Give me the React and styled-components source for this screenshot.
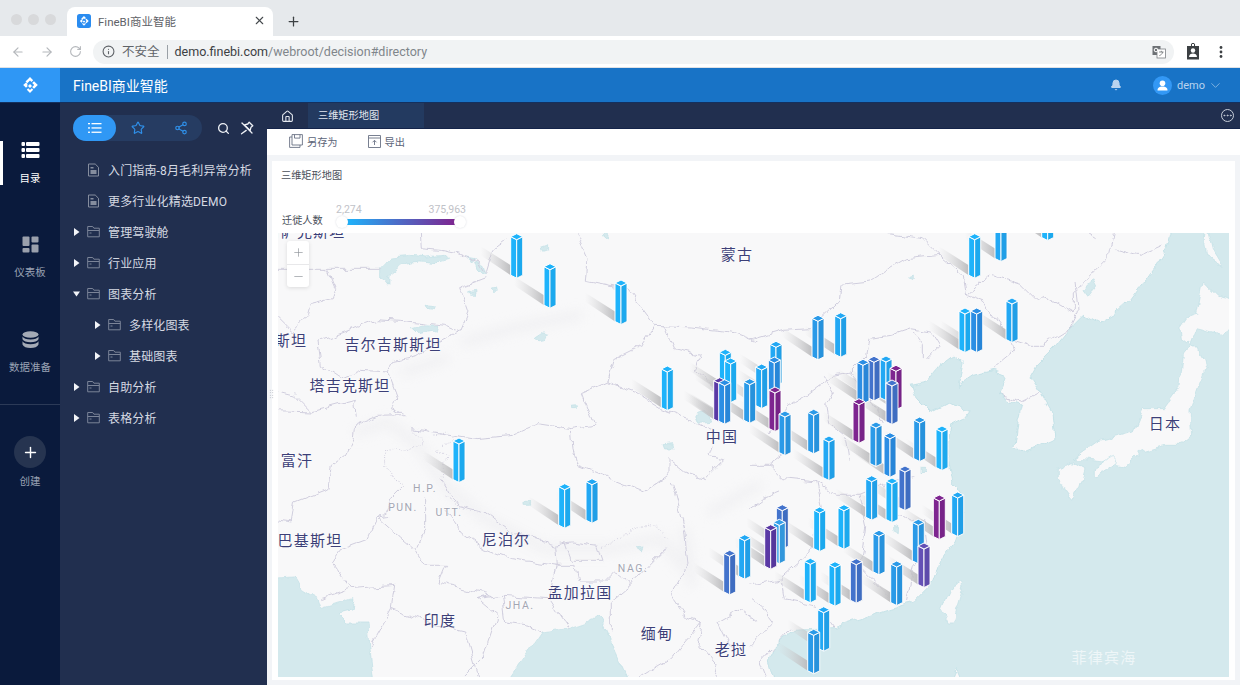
import styled, { createGlobalStyle } from 'styled-components';
import {
  ArrowLeft, ArrowRight, RotateCw, Info, X, Plus, Minus, Bell, ChevronDown, Home, Star, Share2,
  Search, Ellipsis,
} from 'lucide-react';

const GlobalStyle = createGlobalStyle`
  html, body { margin: 0; padding: 0; height: 100%; overflow: hidden; background: #fff; }
  body { font-family: Roboto, "Noto Sans CJK SC", sans-serif; }
  * { box-sizing: border-box; }
`;

const Page = styled.div`
  width: 1240px;
  height: 685px;
  display: flex;
  flex-direction: column;
  overflow: hidden;
`;

/* browser chrome */
const TabStrip = styled.div`
  height: 36px;
  background: #e6e9ec;
  display: flex;
  align-items: flex-end;
  padding-left: 11px;
`;
const Lights = styled.div`
  display: flex;
  gap: 6px;
  align-self: center;
  margin-top: 3px;
  width: 56px;
`;
const Light = styled.span`
  width: 11px;
  height: 11px;
  border-radius: 50%;
  background: #d8d9db;
`;
const BrowserTab = styled.div`
  width: 206px;
  height: 29px;
  background: #fff;
  border-radius: 8px 8px 0 0;
  display: flex;
  align-items: center;
  padding: 0 7px 2px 10px;
  gap: 7px;
  font-size: 11.5px;
  color: #5f6368;
`;
const TabTitle = styled.span`
  flex: 1;
`;
const NewTab = styled.div`
  width: 40px;
  height: 29px;
  display: flex;
  align-items: center;
  justify-content: center;
  color: #3c4043;
`;
const Toolbar = styled.div`
  height: 32px;
  background: #fff;
  display: flex;
  align-items: center;
  padding: 0 11px;
  border-bottom: 1px solid #dfe1e5;
`;
const NavArrows = styled.div`
  display: flex;
  gap: 15px;
  color: #b4b7bb;
  width: 82px;
`;
const Omnibox = styled.div`
  width: 1081px;
  height: 24px;
  background: #f1f3f4;
  border-radius: 12px;
  display: flex;
  align-items: center;
  padding: 0 8px 0 9px;
  font-size: 12.5px;
  color: #80868b;
`;
const Insecure = styled.span`
  color: #5f6368;
  margin-left: 7px;
  padding-right: 7px;
  margin-right: 7px;
  border-right: 1px solid #9aa0a6;
  line-height: 14px;
`;
const Host = styled.span`
  color: #3c4043;
`;
const UrlText = styled.span`
  flex: 1;
`;
const ToolIcons = styled.div`
  display: flex;
  align-items: center;
  margin-left: 12px;
  gap: 19px;
`;

/* app */
const AppHeader = styled.header`
  height: 35px;
  background: #1873c6;
  border-bottom: 1px solid #14305e;
  display: flex;
  align-items: center;
  color: #fff;
`;
const LogoBox = styled.div`
  width: 60px;
  height: 100%;
  background: #2f97f5;
  display: flex;
  align-items: center;
  justify-content: center;
`;
const AppTitle = styled.div`
  margin-left: 13px;
  font-size: 14px;
  flex: 1;
`;
const BellWrap = styled.div`
  display: flex;
  color: #b9d3ef;
  margin-right: 31px;
`;
const Avatar = styled.div`
  width: 19px;
  height: 19px;
  border-radius: 50%;
  background: #3398f5;
  display: flex;
  align-items: center;
  justify-content: center;
`;
const UserName = styled.span`
  font-size: 11px;
  color: #b9d3ef;
  margin: 0 3px 0 5px;
`;
const UserMenu = styled.div`
  display: flex;
  align-items: center;
  color: #b9d3ef;
  margin-right: 17px;
`;

const Body = styled.div`
  flex: 1;
  display: flex;
  min-height: 0;
`;
const SideNav = styled.nav`
  width: 60px;
  background: #0a1a3c;
  padding-top: 37px;
  display: flex;
  flex-direction: column;
  align-items: stretch;
`;
const NavList = styled.div`
  display: flex;
  flex-direction: column;
  gap: 50px;
  margin-bottom: 29px;
`;
const NavItem = styled.div`
  height: 45px;
  position: relative;
  display: flex;
  flex-direction: column;
  align-items: center;
  gap: 11px;
  font-size: 10.5px;
  line-height: 15px;
  color: ${({ $active }) => ($active ? '#fff' : '#9aa3b4')};
  ${({ $active }) => $active && `
    &::before {
      content: '';
      position: absolute;
      left: 0;
      top: 1px;
      width: 3px;
      height: 44px;
      background: #fff;
    }
  `}
`;
const NavIcon = styled.div`
  height: 20px;
  display: flex;
  align-items: center;
`;
const NavDivider = styled.div`
  height: 1px;
  background: #2c3a57;
`;
const CreateBlock = styled.div`
  display: flex;
  flex-direction: column;
  align-items: center;
  margin-top: 31px;
  gap: 6px;
  font-size: 10.5px;
  line-height: 15px;
  color: #9aa3b4;
`;
const CreateCircle = styled.div`
  width: 32px;
  height: 32px;
  border-radius: 50%;
  background: #263450;
  color: #fff;
  display: flex;
  align-items: center;
  justify-content: center;
`;

const Panel = styled.aside`
  width: 207px;
  background: #212f4f;
  padding-top: 12px;
`;
const PanelTop = styled.div`
  display: flex;
  align-items: center;
  padding-left: 13px;
`;
const Pills = styled.div`
  width: 129px;
  height: 26px;
  border-radius: 13px;
  background: #263c62;
  display: flex;
  align-items: center;
  margin-right: 15px;
`;
const Pill = styled.div`
  width: 43px;
  height: 26px;
  border-radius: 13px;
  background: ${({ $active }) => ($active ? '#3098f5' : 'transparent')};
  color: ${({ $active }) => ($active ? '#fff' : '#2f8fe8')};
  display: flex;
  align-items: center;
  justify-content: center;
`;
const PanelTool = styled.div`
  display: flex;
  width: 23px;
  color: #eef1f6;
`;
const Tree = styled.ul`
  list-style: none;
  margin: 13px 0 0;
  padding: 0;
`;
const TreeRow = styled.li`
  height: 31px;
  display: flex;
  align-items: center;
  padding-left: ${({ $level }) => 13 + $level * 21}px;
  font-size: 12px;
  letter-spacing: 0.15px;
  color: #d6dae3;
`;
const Caret = styled.span`
  width: 14px;
  display: flex;
  svg { display: block; }
`;
const TreeLabel = styled.span`
  margin-left: 8px;
  white-space: nowrap;
`;

const Main = styled.main`
  flex: 1;
  display: flex;
  flex-direction: column;
  min-width: 0;
  background: #f2f4f7;
`;
const TabBar = styled.div`
  height: 26px;
  background: #212f4f;
  border-bottom: 1px solid #14244a;
  display: flex;
  align-items: center;
  color: #e4e8ef;
`;
const HomeTab = styled.div`
  width: 41px;
  padding-top: 1px;
  display: flex;
  justify-content: center;
`;
const ReportTab = styled.div`
  width: 116px;
  height: 25px;
  background: #233a60;
  font-size: 10.2px;
  line-height: 25px;
  padding-left: 10px;
`;
const TabMore = styled.div`
  margin-left: auto;
  margin-right: 6px;
  display: flex;
  color: #c8ced9;
`;
const MoreRing = styled.span`
  display: flex;
  border: 1px solid #c8ced9;
  border-radius: 50%;
`;
const ActionBar = styled.div`
  height: 26px;
  background: #fff;
  display: flex;
  align-items: center;
  padding: 0 0 2px 22px;
  gap: 30px;
`;
const Action = styled.div`
  display: flex;
  align-items: center;
  gap: 4px;
  font-size: 10.2px;
  color: #5c6578;
`;
const Card = styled.section`
  flex: 1;
  margin: 6px 5px 5px;
  background: #fff;
  display: flex;
  flex-direction: column;
  min-height: 0;
  padding: 0 6px 3px;
`;
const CardTitle = styled.div`
  height: 28px;
  padding-left: 3px;
  font-size: 10.2px;
  line-height: 29px;
  color: #4a4f5a;
`;
const Legend = styled.div`
  height: 44px;
  display: flex;
  align-items: flex-end;
  padding: 0 0 5px 4px;
  font-size: 10.2px;
  color: #4a4f5a;
`;
const LegendName = styled.span`
  line-height: 14px;
  width: 54px;
`;
const LegendScale = styled.div`
  width: 130px;
  display: flex;
  flex-direction: column;
  margin-bottom: 1px;
`;
const LegendValues = styled.div`
  display: flex;
  justify-content: space-between;
  font-size: 10.5px;
  line-height: 12px;
  color: #bfc2c8;
  padding-bottom: 3px;
`;
const Track = styled.div`
  position: relative;
  height: 6px;
  margin: 0 11px 2px;
  background: linear-gradient(90deg, #1eb3fb, #4b6fc9 45%, #7e2590);
`;
const Knob = styled.span`
  position: absolute;
  top: -3px;
  ${({ $side }) => $side}: -11px;
  width: 12px;
  height: 12px;
  border-radius: 50%;
  background: #fff;
  box-shadow: 0 0 2px rgba(120, 130, 150, 0.3);
`;

const MapCanvas = styled.div`
  flex: 1;
  position: relative;
  overflow: hidden;
  background: #f8f8f9;
  min-height: 0;
  svg { display: block; }
`;
const ZoomBox = styled.div`
  position: absolute;
  left: 9px;
  top: 8px;
  width: 22px;
  border-radius: 3px;
  background: #fff;
  box-shadow: 0 1px 4px rgba(0, 0, 0, 0.12);
  color: #8b8f96;
`;
const ZoomButton = styled.div`
  height: 23px;
  display: flex;
  align-items: center;
  justify-content: center;
  & + & { border-top: 1px solid #e8e8ea; }
`;
const Place = styled.span`
  position: absolute;
  left: ${({ $x }) => $x - 278}px;
  top: ${({ $y, $minor }) => $y - 233 - ($minor ? 1 : 2)}px;
  transform: translate(-50%, -50%);
  white-space: nowrap;
  font-size: ${({ $minor }) => ($minor ? '10.5px' : '15px')};
  letter-spacing: ${({ $minor }) => ($minor ? '1.5px' : '1.2px')};
  color: ${({ $minor, $sea }) => ($sea ? '#eef6f8' : $minor ? '#a3a6b3' : '#3c3f78')};
  text-shadow: ${({ $sea }) => ($sea ? 'none' : '0 0 2px #fff, 0 0 2px #fff')};
`;
const Grip = styled.div`
  position: absolute;
  left: 269px;
  top: 389px;
  width: 5px;
  height: 10px;
  background-image: radial-gradient(#a8adb8 0.7px, transparent 0.8px);
  background-size: 2.5px 2.5px;
`;

const logoPath = 'M9 1l3.2 3.2L10.4 6 9 4.600 6.300 7.300 4.500 5.500zM13 5.200L16.800 9 13 12.800 11.200 11 13.200 9 11.200 7zM5 6.400L6.800 8.200 5.900 9.100 6.800 10 5 11.800 2.200 9zM9 8l2 2-2 2-2-2zM7.200 12.300L9 14.100l1.800-1.800 1.400 1.400L9 17l-3.200-3.300z';

const Logo = () => (
  <svg width="18" height="18" viewBox="0 0 18 18">
    <path fill="#fff" d={logoPath} />
  </svg>
);

const Favicon = () => (
  <svg width="14" height="14" viewBox="0 0 14 14">
    <rect width="14" height="14" rx="2.500" fill="#2a8cf0" />
    <g transform="translate(1.500 1.500) scale(0.61)"><path fill="#fff" d={logoPath} /></g>
  </svg>
);

const TranslateIcon = () => (
  <svg width="14" height="14" viewBox="0 0 14 14">
    <rect x="0.500" y="1" width="8" height="9" fill="#6d7175" />
    <rect x="5" y="4" width="8.500" height="9" fill="#fff" stroke="#7d8185" strokeWidth="0.800" />
    <path d="M7 7h4.500M9.300 5.800v1.300M10.800 7c-.5 2-2 3-3.500 3.700" fill="none" stroke="#6d7175" strokeWidth="0.800" />
    <circle cx="4" cy="5" r="1.800" fill="none" stroke="#fff" />
  </svg>
);

const ClipboardUser = () => (
  <svg width="14" height="17" viewBox="0 0 14 17">
    <path d="M1 3h12v13.500H1z" fill="#3c4043" />
    <circle cx="7" cy="2" r="1.700" fill="none" stroke="#3c4043" />
    <circle cx="7" cy="7.500" r="2.200" fill="#fff" />
    <path d="M3 14c0-2.500 2-3.500 4-3.500s4 1 4 3.500z" fill="#fff" />
  </svg>
);

const Kebab = () => (
  <svg width="4" height="14" viewBox="0 0 4 14" fill="#3c4043">
    <circle cx="2" cy="2.500" r="1.400" />
    <circle cx="2" cy="7" r="1.400" />
    <circle cx="2" cy="11.500" r="1.400" />
  </svg>
);

const PinCrossed = () => (
  <svg width="14" height="14" viewBox="0 0 14 14" fill="none" stroke="#eef1f6" strokeWidth="1.300" strokeLinejoin="round" strokeLinecap="round">
    <path d="M9.200 1.200l3.600 3.600-1.800 1.400-.9 3.300-5.600-5.600 3.300-.9z" />
    <path d="M6.200 9.400L1.500 12.800" />
    <path d="M12 12L2 2" />
  </svg>
);

const DirectoryIcon = () => (
  <svg width="19" height="20" viewBox="0 0 19 20" fill="#fff">
    <rect x="0.500" y="2" width="3.500" height="4" rx="1" />
    <rect x="5" y="2" width="13.500" height="4" rx="1" />
    <rect x="0.500" y="8" width="3.500" height="4" rx="1" />
    <rect x="5" y="8" width="13.500" height="4" rx="1" />
    <rect x="0.500" y="14" width="3.500" height="4" rx="1" />
    <rect x="5" y="14" width="13.500" height="4" rx="1" />
  </svg>
);

const DashboardIcon = () => (
  <svg width="17" height="17" viewBox="0 0 17 17" fill="#9aa0ac">
    <rect x="0.500" y="0.500" width="7" height="9.500" rx="1" />
    <rect x="9.500" y="0.500" width="7" height="6" rx="1" />
    <rect x="0.500" y="12" width="7" height="4.500" rx="1" />
    <rect x="9.500" y="8.500" width="7" height="8" rx="1" />
  </svg>
);

const DataIcon = () => (
  <svg width="17" height="18" viewBox="0 0 17 18" fill="#a5abb6">
    <ellipse cx="8.500" cy="3.500" rx="8" ry="3.200" />
    <path d="M.5 5.500c1 2 4 3 8 3s7-1 8-3v2.800c-1 2-4 3-8 3s-7-1-8-3z" />
    <path d="M.5 10.200c1 2 4 3 8 3s7-1 8-3v3.300c-1 2.500-4 3.500-8 3.500s-7-1-8-3.500z" />
  </svg>
);

const ListIcon = () => (
  <svg width="14" height="12" viewBox="0 0 14 12" fill="#fff">
    <rect x="0" y="1" width="2" height="1.300" />
    <rect x="3.500" y="1" width="10" height="1.300" />
    <rect x="0" y="5.300" width="2" height="1.300" />
    <rect x="3.500" y="5.300" width="10" height="1.300" />
    <rect x="0" y="9.600" width="2" height="1.300" />
    <rect x="3.500" y="9.600" width="10" height="1.300" />
  </svg>
);

const FileIcon = () => (
  <svg width="13" height="14" viewBox="0 0 13 14" fill="none">
    <path d="M1.500 1h6.700l3.300 3.300V13h-10z" stroke="#858d9e" />
    <path d="M3.500 7h6v4h-6zM3.500 4h3v1.500h-3z" fill="#858d9e" />
  </svg>
);

const FolderIcon = () => (
  <svg width="13" height="13" viewBox="0 0 13 13" fill="none" stroke="#7b8498">
    <path d="M.7 11.800V1.500h5l1.200 1.700h5.400v8.600z" />
    <path d="M.7 5.500h11.600M2.500 8h2" />
  </svg>
);

const CaretIcon = ({ open }) => (
  <svg width="7" height="8" viewBox="0 0 7 8" fill="#f2f4f8">
    {open ? <path d="M0 1.500h7L3.500 6.500z" /> : <path d="M1 0l5.500 4L1 8z" />}
  </svg>
);

const SaveAsIcon = () => (
  <svg width="14" height="14" viewBox="0 0 14 14" fill="none" stroke="#6a7285" strokeWidth="0.900">
    <path d="M3 .6h10.400v10.400H3z" />
    <path d="M5.500.6v3.500h5.500V.6M3 3H.6v10.400H11V11" />
  </svg>
);

const ExportIcon = () => (
  <svg width="13" height="13" viewBox="0 0 13 13" fill="none" stroke="#6a7285" strokeWidth="0.900">
    <path d="M.5.500h12v12H.5zM.5 3h12" />
    <path d="M6.500 10V5.500M4.500 7.300l2-2 2 2" />
  </svg>
);

const UserIcon = () => (
  <svg width="11" height="11" viewBox="0 0 11 11" fill="#fff">
    <circle cx="5.500" cy="3.200" r="2.800" />
    <path d="M.5 10.500c0-3 2-4 5-4s5 1 5 4z" />
  </svg>
);

const navItems = [
  { label: '目录', icon: <DirectoryIcon />, active: true },
  { label: '仪表板', icon: <DashboardIcon /> },
  { label: '数据准备', icon: <DataIcon /> },
];

const treeItems = [
  { label: '入门指南-8月毛利异常分析', level: 0, file: true },
  { label: '更多行业化精选DEMO', level: 0, file: true },
  { label: '管理驾驶舱', level: 0 },
  { label: '行业应用', level: 0 },
  { label: '图表分析', level: 0, open: true },
  { label: '多样化图表', level: 1 },
  { label: '基础图表', level: 1 },
  { label: '自助分析', level: 0 },
  { label: '表格分析', level: 0 },
];

const places = [
  { text: '蒙古', x: 737, y: 255 },
  { text: '哈萨克斯坦', x: 305, y: 232 },
  { text: '吉尔吉斯斯坦', x: 393, y: 345 },
  { text: '塔吉克斯坦', x: 350, y: 386 },
  { text: '斯坦', x: 291, y: 341 },
  { text: '富汗', x: 297, y: 461 },
  { text: '巴基斯坦', x: 310, y: 541 },
  { text: '尼泊尔', x: 506, y: 540 },
  { text: '孟加拉国', x: 580, y: 593 },
  { text: '印度', x: 440, y: 621 },
  { text: '缅甸', x: 657, y: 634 },
  { text: '老挝', x: 731, y: 650 },
  { text: '中国', x: 722, y: 437 },
  { text: '日本', x: 1165, y: 424 },
  { text: '菲律宾海', x: 1104, y: 658, sea: true },
  { text: 'H.P.', x: 425, y: 489, minor: true },
  { text: 'PUN.', x: 403, y: 508, minor: true },
  { text: 'UTT.', x: 449, y: 513, minor: true },
  { text: 'NAG.', x: 633, y: 569, minor: true },
  { text: 'JHA.', x: 520, y: 606, minor: true },
];

const BRIGHT = '#1eb3fb';
const SKY = '#22a8f4';
const BLUE = '#2a9ae8';
const DEEP = '#2b8ee4';
const STEEL = '#4373cc';
const VIOLET = '#6450b5';
const INDIGO = '#5a39a5';
const PURPLE = '#7e2590';

const bars = [
  [1047.7, 196, BRIGHT], [1001, 217, SKY], [516.7, 233.7, BRIGHT], [974.7, 233.7, BRIGHT],
  [550, 263.7, BRIGHT], [621, 280, BRIGHT], [1012, 298, SKY], [965, 308, BRIGHT], [976.7, 308, DEEP],
  [840.7, 312.7, SKY], [818, 315.3, BLUE], [776, 341.3, SKY], [725.3, 349.3, BRIGHT], [886, 356, SKY],
  [874, 356.3, STEEL], [774.3, 357, DEEP], [730.7, 358, BRIGHT], [863, 359.3, DEEP], [761.7, 364, SKY],
  [667.3, 366, BRIGHT], [896, 365.3, PURPLE], [719.7, 377.7, INDIGO], [749.7, 378.7, BLUE],
  [724.7, 379.7, DEEP], [892, 380, STEEL], [775, 387, PURPLE], [859, 398.7, PURPLE],
  [813.7, 409.3, BLUE], [785, 411, BLUE], [919.7, 417, BLUE], [876, 422, BLUE], [942, 426, BRIGHT],
  [890, 432.7, DEEP], [829, 436, SKY], [459, 438, BRIGHT], [905, 466, STEEL], [871.7, 475.7, SKY],
  [592, 478.7, SKY], [892, 478, BRIGHT], [564.7, 483.7, BRIGHT], [957.7, 492, SKY], [939.3, 495, PURPLE],
  [782.3, 504.7, STEEL], [844, 504.7, BRIGHT], [819.7, 507, BRIGHT], [918.3, 519.3, BLUE],
  [779.3, 519.3, '#35a0e8'], [770.7, 524.7, INDIGO], [879, 530.3, BLUE], [744.7, 534.7, SKY],
  [924, 543, VIOLET], [729.7, 550.3, STEEL], [810.3, 558.3, BRIGHT], [856.3, 558.7, STEEL],
  [896.7, 561, BLUE], [835, 561.7, BRIGHT], [823.7, 606.7, SKY], [813.7, 629.3, BLUE],
];

const BAR_HEIGHT = 44.5;

const BarShadow = ({ cx, top }) => {
  const b = top + BAR_HEIGHT;
  return (
    <polygon
      points={`${cx - 6},${b - 13} ${cx - 6},${b - 3} ${cx - 36},${b - 23} ${cx - 36},${b - 32}`}
      fill="url(#shadowFade)"
    />
  );
};

const Bar3D = ({ cx, top, color }) => {
  const b = top + BAR_HEIGHT;
  return (
    <g stroke="#fff" strokeWidth="1" strokeLinejoin="round">
      <polygon points={`${cx - 6},${top + 3} ${cx},${top + 6} ${cx},${b} ${cx - 6},${b - 3}`} fill={color} />
      <polygon points={`${cx + 6},${top + 3} ${cx},${top + 6} ${cx},${b} ${cx + 6},${b - 3}`} fill={color} />
      <polygon points={`${cx},${b} ${cx + 6},${b - 3} ${cx + 6},${top + 3} ${cx},${top + 6}`} fill="#000" fillOpacity="0.050" stroke="none" />
      <polygon points={`${cx - 6},${top + 3} ${cx},${top} ${cx + 6},${top + 3} ${cx},${top + 6}`} fill={color} />
    </g>
  );
};

const SEA = '#d4e9ed';
const COAST = '#bfe0e6';
const BORDER = '#d0cede';

// outlines below are in the coordinates of the west / east map sheets, scaled by thirds
const westBorders = [
  'M-30 112H305', 'M145 112L170 170 160 200 100 215 90 250 40 300 -30 230',
  'M425 -30L430 50 490 55 540 65 600 90 625 130 650 50 690 20',
  'M625 140L545 170 570 240 545 300 480 330 420 370 350 385 330 420 360 500 340 530 380 548 300 550 230 580 225 620',
  'M330 420L250 415 190 440 130 400 120 330 200 300 300 260 370 265 420 270 500 280 545 300',
  'M-30 470L50 490 100 540 -30 535M100 540L230 505 235 560',
  'M225 620L200 670 160 700 150 770 50 810 40 870 -30 860',
  'M340 850L300 855 270 920 190 950 160 990 220 1070 130 1100',
  'M880 -30L930 80 925 145 1050 170 1130 280 1240 285 1360 300 1440 330',
  'M1130 280L1090 340 1010 380 990 450 910 485 945 580 880 590',
  'M600 620L700 610 780 575 880 590 885 650 900 700 1000 740 1100 780 1170 730 1170 680 1220 720 1280 740 1340 680 1290 670 1300 640',
  'M990 450L1070 480 1150 530 1230 560 1300 590',
  'M1160 280L1190 350 1270 370 1250 420 1310 470',
  'M400 590L600 620',
  'M490 740L540 820 620 840 700 900 830 940 880 930 960 940 975 985 880 985 860 930M830 940L835 1000 700 980 620 950 550 900 500 830',
  'M1220 900L1180 750M1220 900L1230 1000 1180 1090 1220 1150 1270 1170 1260 1230 1320 1300 1310 1340',
  'M830 1000L890 1000 900 1050 980 1050 1010 1020 1060 1060 1000 1110 1000 1200',
  'M835 1000L810 1100 870 1190M1160 950L1110 1000 1060 1060',
  'M300 855L350 900 410 950 440 1000 500 1000 480 1050 640 1090 600 1100 670 1090 810 1100',
  'M380 760L340 800 320 850M440 800L440 900 420 950',
  'M220 1070L350 1060 340 1130 280 1240M340 1130L470 1180 560 1200 600 1340M600 1100L660 1150 620 1270 550 1340',
  'M670 1090L680 1170 750 1180 790 1200',
  'M1080 1340L1180 1280 1270 1170',
  'M1360 1250L1320 1170 1390 1130 1440 1170',
];

const westDotted = [
  'M400 590L435 630 390 655 320 650 320 700 350 745 380 755',
  'M470 610L510 595 530 620 480 650 510 670 490 700 500 740',
  'M500 790L550 830',
  'M975 950L1060 890 1130 880 1170 920',
];

const eastBorders = [
  'M0 325L100 295 180 290 265 210 270 160 360 150 420 110 470 80 570 70 520 20 415 5',
  'M570 70L640 130 650 190 720 130 810 160 860 210 880 190 970 240 970 180 1000 150',
  'M650 190L700 210 780 320 840 340 880 340 960 290',
  'M780 320L790 360 730 410M975 150L985 240 960 290',
  'M1100 -30L1080 70 1000 150M960 -30L1040 20M1100 50L1170 70 1240 40',
  'M745 490L810 510 870 480',
  'M530 380L570 340 545 300 480 290 420 310 360 320 350 370 300 420 250 430 170 490 120 520 60 600',
  'M300 420L360 500 400 570M230 520L250 480 220 430M230 520L240 580 290 620 300 690',
  'M0 700L60 700 100 740 200 750 260 790 330 790 400 760 490 740',
  'M60 700L100 670M200 750L220 840 180 960 90 1040 0 1060',
  'M330 790L350 880 340 960 330 1010 440 1120',
  'M400 760L440 850 520 870 530 950 490 1000 470 1110',
  'M90 1040L100 1100 200 1120 250 1190',
  'M0 1100L40 1130 70 1170 0 1240M120 1190L30 1290 50 1340',
  'M490 300L520 340 520 380',
  'M0 830L40 800 90 780',
];

const coast = 'M1275 -40L1250 50 1220 100 1180 150 1135 210 1090 250 1045 275 1000 250 960 290 920 340 860 400 840 435 870 480 905 540 915 620 870 640 810 665 795 650 805 560 815 520 780 510 750 490 770 430 730 415 670 430 625 460 640 395 610 370 570 400 530 450 485 460 500 500 540 540 590 515 660 535 640 560 600 580 590 640 600 710 610 760 640 790 640 860 620 920 570 990 550 1050 490 1110 430 1130 340 1160 250 1190 130 1195 70 1240 55 1290 80 1380H590L620 1310 650 1380H1480V-40Z';

const eastIslands = [
  'M1360 150L1400 190 1480 210V270L1415 310 1380 300 1340 290 1320 340 1295 320 1290 290 1310 260 1340 250 1350 200Z',
  'M1370 -30L1390 50 1420 100 1400 90 1370 70 1365 40Z',
  'M1320 345L1345 345 1365 410 1340 480 1320 540 1325 610 1290 640 1250 640 1180 660 1130 700 1080 690 1000 680 970 680 1040 630 1150 600 1180 530 1240 530 1290 460 1300 370Z',
  'M1030 710L1090 670 1105 690 1060 720 1030 730Z',
  'M925 715L970 690 1005 710 990 760 965 805 945 780 925 740Z',
  'M630 1050L640 1070 610 1170 595 1170 575 1130 600 1070Z',
];

const westLakes = [
  'M305 110L340 75 400 70 440 75 500 70 515 85 480 95 420 90 370 100 330 130 330 160 305 130Z',
  'M590 90L615 100 625 130 600 120Z', 'M565 75L590 80 585 90Z',
  'M400 290L440 278 476 280 470 300 420 308Z', 'M435 218L475 222 465 232 440 230Z',
  'M770 318L790 305 812 310 805 325 780 330Z', 'M795 45L815 38 815 50 800 55Z',
  'M575 182L590 178 592 190 578 190Z', 'M640 168L655 165 658 178 645 178Z',
  'M875 520L895 518 895 527 878 527Z', 'M1155 635L1185 632 1188 648 1160 648Z',
  'M1250 545L1280 535 1300 565 1260 568Z', 'M735 808L755 808 755 820 735 820Z',
  'M1075 950L1095 948 1090 960Z', 'M970 5L990 0 985 18Z',
];

const westSeas = [
  'M-40 1040L50 1035 70 1070 120 1100 130 1130 225 1100 220 1130 180 1140 210 1170 270 1170 275 1240 290 1380H-40Z',
  'M665 1380L790 1200 870 1190 930 1170 960 1150 1000 1230 1070 1380Z',
];

const MapDrawing = () => (
  <svg width="951" height="444" viewBox="278 233 951 444">
    <defs>
      <linearGradient id="shadowFade" x1="1" y1="0" x2="0" y2="0">
        <stop offset="0" stopColor="#bdbdbf" />
        <stop offset="1" stopColor="#d4d4d6" stopOpacity="0" />
      </linearGradient>
      <filter id="soft" filterUnits="userSpaceOnUse" x="250" y="200" width="1010" height="510">
        <feGaussianBlur stdDeviation="6" />
      </filter>
      <filter id="rough" filterUnits="userSpaceOnUse" x="250" y="200" width="1010" height="510">
        <feTurbulence type="fractalNoise" baseFrequency="0.07" numOctaves="3" seed="4" />
        <feDisplacementMap in="SourceGraphic" scale="9" xChannelSelector="R" yChannelSelector="G" />
      </filter>
    </defs>
    <rect x="278" y="233" width="951" height="444" fill="#f8f8f9" />
    <g filter="url(#soft)" opacity="0.600">
      <g transform="translate(278 232) scale(0.3333)" fill="none" stroke="#ececef" strokeWidth="30" strokeLinecap="round">
        <path d="M240 600L330 570 420 640 500 760 620 860 800 950 1000 950 1150 920 1210 1000" />
        <path d="M560 330L700 290 900 250M380 420L500 380" />
        <path d="M1220 900L1240 1050M1300 840L1440 760" />
      </g>
    </g>
    <g filter="url(#rough)">
      <g transform="translate(278 232) scale(0.3333)">
        <g fill={SEA} stroke={COAST} strokeWidth="2">
          {westSeas.map((d) => <path key={d} d={d} />)}
          {westLakes.map((d) => <path key={d} d={d} />)}
        </g>
        <g fill="none" stroke={BORDER} strokeWidth="3" strokeLinejoin="round">
          {westBorders.map((d) => <path key={d} d={d} />)}
          <g strokeDasharray="3 5">
            {westDotted.map((d) => <path key={d} d={d} />)}
          </g>
        </g>
      </g>
      <g transform="translate(750 232) scale(0.3333)">
        <g fill="none" stroke={BORDER} strokeWidth="3" strokeLinejoin="round">
          {eastBorders.map((d) => <path key={d} d={d} />)}
        </g>
        <path d={coast} fill={SEA} stroke={COAST} strokeWidth="2.500" strokeLinejoin="round" />
        <g fill="#f8f8f9" stroke={COAST} strokeWidth="2" strokeLinejoin="round">
          {eastIslands.map((d) => <path key={d} d={d} />)}
        </g>
        <g fill={SEA} stroke={COAST} strokeWidth="2">
          <path d="M1005 170L1030 145 1040 165 1020 190Z" />
          <path d="M470 140L490 132 490 146Z" />
          <path d="M510 700L530 700 528 720 510 722Z" />
          <path d="M425 880L445 885 445 905 425 895Z" />
        </g>
      </g>
    </g>
    {bars.map(([cx, top], i) => <BarShadow key={i} cx={cx} top={top} />)}
    {bars.map(([cx, top, color], i) => <Bar3D key={i} cx={cx} top={top} color={color} />)}
  </svg>
);

export default function App() {
  return (
    <Page>
      <GlobalStyle />
      <TabStrip>
        <Lights><Light /><Light /><Light /></Lights>
        <BrowserTab>
          <Favicon />
          <TabTitle>FineBI商业智能</TabTitle>
          <X size={13} color="#45494d" />
        </BrowserTab>
        <NewTab><Plus size={15} /></NewTab>
      </TabStrip>
      <Toolbar>
        <NavArrows>
          <ArrowLeft size={14} />
          <ArrowRight size={14} />
          <RotateCw size={13} />
        </NavArrows>
        <Omnibox>
          <Info size={13} color="#5f6368" />
          <Insecure>不安全</Insecure>
          <UrlText><Host>demo.finebi.com</Host>/webroot/decision#directory</UrlText>
          <TranslateIcon />
        </Omnibox>
        <ToolIcons>
          <ClipboardUser />
          <Kebab />
        </ToolIcons>
      </Toolbar>
      <AppHeader>
        <LogoBox><Logo /></LogoBox>
        <AppTitle>FineBI商业智能</AppTitle>
        <BellWrap><Bell size={12} fill="currentColor" /></BellWrap>
        <UserMenu>
          <Avatar><UserIcon /></Avatar>
          <UserName>demo</UserName>
          <ChevronDown size={15} strokeWidth={1} />
        </UserMenu>
      </AppHeader>
      <Body>
        <SideNav>
          <NavList>
            {navItems.map((item) => (
              <NavItem key={item.label} $active={item.active}>
                <NavIcon>{item.icon}</NavIcon>
                {item.label}
              </NavItem>
            ))}
          </NavList>
          <NavDivider />
          <CreateBlock>
            <CreateCircle><Plus size={17} /></CreateCircle>
            创建
          </CreateBlock>
        </SideNav>
        <Panel>
          <PanelTop>
            <Pills>
              <Pill $active><ListIcon /></Pill>
              <Pill><Star size={14} /></Pill>
              <Pill><Share2 size={14} /></Pill>
            </Pills>
            <PanelTool><Search size={13} strokeWidth={2.4} /></PanelTool>
            <PanelTool><PinCrossed /></PanelTool>
          </PanelTop>
          <Tree>
            {treeItems.map((item) => (
              <TreeRow key={item.label} $level={item.level}>
                <Caret>{!item.file && <CaretIcon open={item.open} />}</Caret>
                {item.file ? <FileIcon /> : <FolderIcon />}
                <TreeLabel>{item.label}</TreeLabel>
              </TreeRow>
            ))}
          </Tree>
        </Panel>
        <Main>
          <TabBar>
            <HomeTab><Home size={13} /></HomeTab>
            <ReportTab>三维矩形地图</ReportTab>
            <TabMore><MoreRing><Ellipsis size={11} /></MoreRing></TabMore>
          </TabBar>
          <ActionBar>
            <Action><SaveAsIcon />另存为</Action>
            <Action><ExportIcon />导出</Action>
          </ActionBar>
          <Card>
            <CardTitle>三维矩形地图</CardTitle>
            <Legend>
              <LegendName>迁徙人数</LegendName>
              <LegendScale>
                <LegendValues><span>2,274</span><span>375,963</span></LegendValues>
                <Track><Knob $side="left" /><Knob $side="right" /></Track>
              </LegendScale>
            </Legend>
            <MapCanvas>
              <MapDrawing />
              {places.map((place) => (
                <Place key={place.text} $x={place.x} $y={place.y} $minor={place.minor} $sea={place.sea}>{place.text}</Place>
              ))}
              <ZoomBox>
                <ZoomButton><Plus size={13} strokeWidth={1.2} /></ZoomButton>
                <ZoomButton><Minus size={13} strokeWidth={1.2} /></ZoomButton>
              </ZoomBox>
            </MapCanvas>
          </Card>
          <Grip />
        </Main>
      </Body>
    </Page>
  );
}
